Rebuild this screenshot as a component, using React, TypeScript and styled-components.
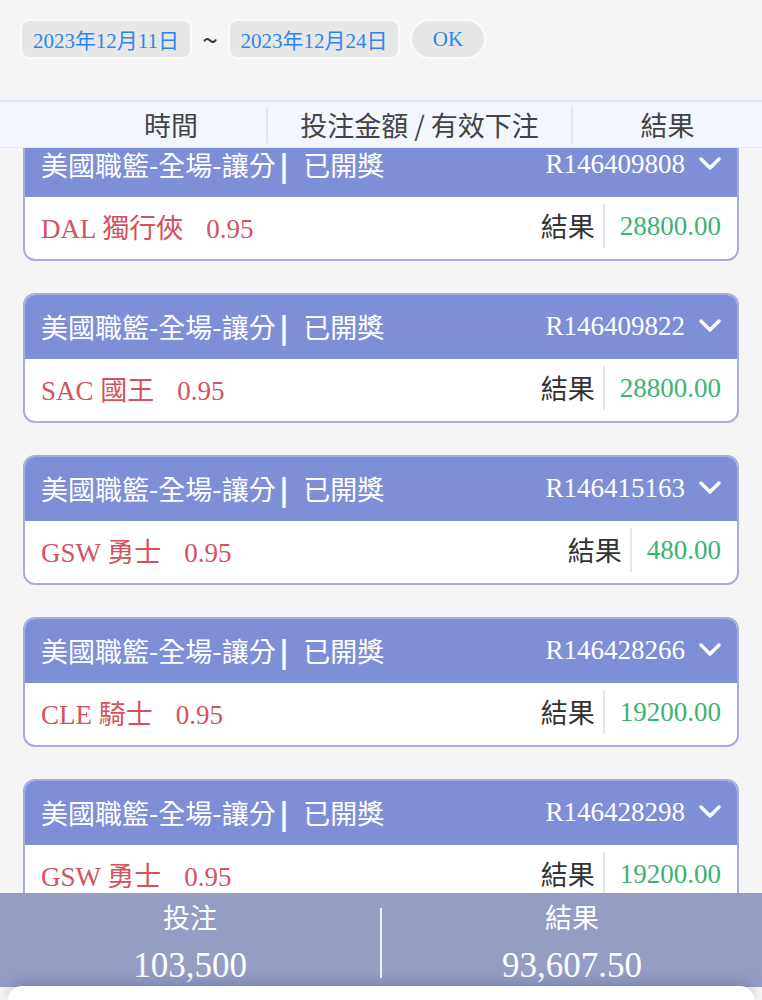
import * as React from 'react';
import styled, { createGlobalStyle } from 'styled-components';

const GlobalStyle = createGlobalStyle`
  html, body {
    margin: 0;
    padding: 0;
    background: #f5f5f5;
  }
  * {
    box-sizing: border-box;
  }
`;

type Bet = {
  id: string;
  team: string;
  odds: string;
  amount: string;
};

const bets: Bet[] = [
  { id: 'R146409808', team: 'DAL 獨行俠', odds: '0.95', amount: '28800.00' },
  { id: 'R146409822', team: 'SAC 國王', odds: '0.95', amount: '28800.00' },
  { id: 'R146415163', team: 'GSW 勇士', odds: '0.95', amount: '480.00' },
  { id: 'R146428266', team: 'CLE 騎士', odds: '0.95', amount: '19200.00' },
  { id: 'R146428298', team: 'GSW 勇士', odds: '0.95', amount: '19200.00' },
];

const Chevron = () => (
  <svg width="22" height="14" viewBox="0 0 22 14">
    <path d="M2 2 L11 11 L20 2" fill="none" stroke="#fff" strokeWidth="3.4" strokeLinecap="round" strokeLinejoin="round" />
  </svg>
);

const BetCard = ({ bet }: { bet: Bet }) => (
  <Card>
    <CardHeader>
      <Title>
        美國職籃-全場-讓分<Bar>|</Bar>已開獎
      </Title>
      <OrderNo>{bet.id}</OrderNo>
      <Chevron />
    </CardHeader>
    <CardBody>
      <Pick>
        {bet.team}
        <Odds>{bet.odds}</Odds>
      </Pick>
      <ResultLabel>結果</ResultLabel>
      <Amount>{bet.amount}</Amount>
    </CardBody>
  </Card>
);

const App = () => {
  const listRef = React.useRef<HTMLDivElement>(null);

  React.useLayoutEffect(() => {
    if (listRef.current) listRef.current.scrollTop = 17;
  }, []);

  return (
    <Page>
      <GlobalStyle />
      <TopBar>
        <DateBox>2023年12月11日</DateBox>
        <Tilde>~</Tilde>
        <DateBox>2023年12月24日</DateBox>
        <OkButton>OK</OkButton>
      </TopBar>

      <TableHead>
        <HeadCell>時間</HeadCell>
        <HeadCell divided>投注金額 / 有效下注</HeadCell>
        <HeadCell divided>結果</HeadCell>
      </TableHead>

      <List ref={listRef}>
        {bets.map(b => (
          <BetCard key={b.id} bet={b} />
        ))}
      </List>

      <Summary>
        <SummaryCol>
          <SummaryLabel>投注</SummaryLabel>
          <SummaryValue>103,500</SummaryValue>
        </SummaryCol>
        <SummaryCol divided>
          <SummaryLabel>結果</SummaryLabel>
          <SummaryValue>93,607.50</SummaryValue>
        </SummaryCol>
      </Summary>
      <Sheet />
    </Page>
  );
};

const serif = `"Liberation Serif", "Noto Sans CJK TC", serif`;
const sans = `"Noto Sans CJK TC", "Noto Sans", sans-serif`;

const Page = styled.div`
  height: 100vh;
  display: flex;
  flex-direction: column;
  overflow: hidden;
  background: #f5f5f5;
  font-family: ${serif};
`;

const TopBar = styled.div`
  height: 100px;
  flex-shrink: 0;
  display: flex;
  align-items: flex-start;
  padding: 19px 0 0 20px;
`;

const DateBox = styled.div`
  height: 40px;
  width: 172px;
  display: flex;
  align-items: center;
  justify-content: center;
  background: #e7e7e7;
  border: 2px solid #fbfbfb;
  border-radius: 9px;
  color: #2a85ef;
  font-size: 21px;
  font-family: ${serif};
`;

const Tilde = styled.span`
  width: 36px;
  line-height: 40px;
  text-align: center;
  color: #333;
  font-size: 28px;
  font-family: ${sans};
`;

const OkButton = styled.button`
  margin-left: 10px;
  height: 40px;
  width: 76px;
  border-radius: 20px;
  border: 2px solid #fbfbfb;
  background: #e7e7e7;
  color: #2a85ef;
  font-size: 21px;
  font-family: ${serif};
  padding: 0;
`;

const TableHead = styled.div`
  height: 48px;
  flex-shrink: 0;
  display: grid;
  grid-template-columns: 190px 305px 1fr;
  align-items: center;
  padding-left: 76px;
  background: #f3f6fe;
  border-top: 2px solid #dfe5f6;
  border-bottom: 1px solid #e6eaf6;
`;

const HeadCell = styled.div<{ divided?: boolean }>`
  text-align: center;
  font-family: ${sans};
  font-size: 27px;
  color: #444;
  line-height: 36px;
  border-left: ${p => (p.divided ? '2px solid #e3e6ee' : 'none')};
`;

const List = styled.div`
  flex: 1;
  overflow-y: auto;
  display: flex;
  flex-direction: column;
  gap: 32px;
  padding: 0 23px 20px;
  scrollbar-width: none;
  &::-webkit-scrollbar {
    display: none;
  }
`;

const Card = styled.div`
  flex-shrink: 0;
  border: 2px solid #a7addb;
  border-radius: 12px;
  overflow: hidden;
  background: #fff;
`;

const CardHeader = styled.div`
  height: 64px;
  display: flex;
  align-items: center;
  padding: 0 16px 2px;
  background: #7f8fd7;
  color: #fff;
`;

const Title = styled.div`
  flex: 1;
  font-family: ${sans};
  font-size: 27px;
`;

const Bar = styled.span`
  font-weight: 900;
  margin: 0 15px 0 4px;
`;

const OrderNo = styled.span`
  font-family: ${serif};
  font-size: 27px;
  margin-right: 14px;
`;

const CardBody = styled.div`
  height: 62px;
  display: flex;
  align-items: center;
  padding: 0 16px 4px;
`;

const Pick = styled.div`
  flex: 1;
  color: #d4525e;
  font-size: 27px;
  font-family: ${serif};
`;

const Odds = styled.span`
  margin-left: 23px;
`;

const ResultLabel = styled.span`
  font-family: ${sans};
  font-size: 27px;
  color: #333;
  padding-right: 8px;
  line-height: 44px;
  border-right: 2px solid #e3e6f0;
`;

const Amount = styled.span`
  padding-left: 15px;
  font-size: 27px;
  color: #3cb371;
  font-family: ${serif};
`;

const Summary = styled.div`
  height: 94px;
  flex-shrink: 0;
  display: grid;
  grid-template-columns: 380px 1fr;
  align-items: center;
  background: #959dc5;
  color: #fff;
`;

const SummaryCol = styled.div<{ divided?: boolean }>`
  display: flex;
  flex-direction: column;
  align-items: center;
  border-left: ${p => (p.divided ? '2px solid #f2f3fa' : 'none')};
  margin-top: 6px;
  height: 70px;
`;

const SummaryLabel = styled.div`
  font-family: ${sans};
  font-size: 27px;
  line-height: 30px;
  margin-top: -6px;
`;

const SummaryValue = styled.div`
  font-family: ${serif};
  font-size: 35px;
  line-height: 40px;
  margin-top: 14px;
`;

const Sheet = styled.div`
  height: 14px;
  flex-shrink: 0;
  margin: -1px 8px 0;
  background: #fff;
  border-radius: 20px 20px 0 0;
  box-shadow: 0 -4px 12px rgba(80, 90, 150, 0.35);
`;

export default App;
